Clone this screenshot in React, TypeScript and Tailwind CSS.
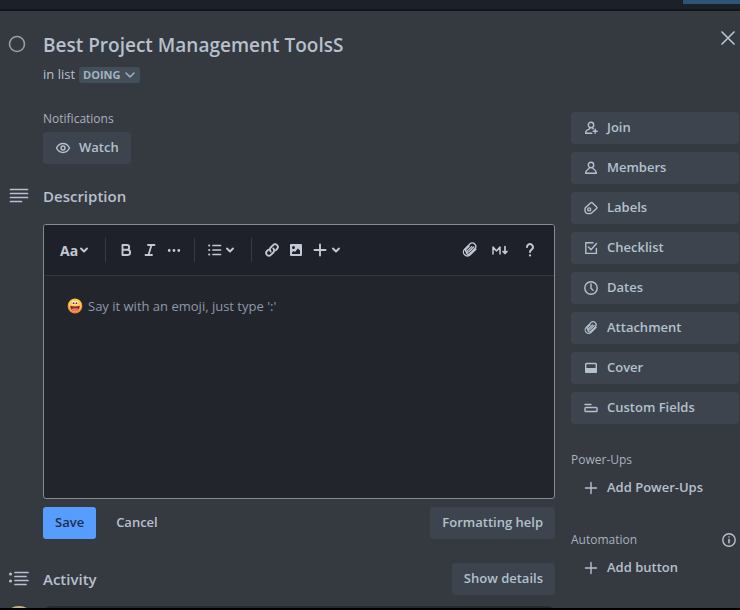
import type { ReactNode } from "react";

type IconProps = { children: ReactNode; className?: string; box?: string };

function Icon({ children, className = "size-4", box = "0 0 16 16" }: IconProps) {
  return (
    <svg
      viewBox={box}
      className={`shrink-0 ${className}`}
      fill="none"
      stroke="currentColor"
      strokeWidth="1.4"
      strokeLinecap="round"
      strokeLinejoin="round"
      aria-hidden="true"
    >
      {children}
    </svg>
  );
}

const clip = (
  <path
    d="M7.2 4.6 4.6 7.200a1.700 1.700 0 0 0 2.400 2.400l4.200-4.200M11.200 5.400 8 8.600M13.200 7.300l-5 5a3.500 3.500 0 0 1-5-5l4.700-4.700a3 3 0 0 1 4.300 4.300l-4.500 4.500a1.700 1.700 0 0 1-2.400-2.400L9.500 5"
    strokeWidth="1.200"
  />
);

const actions: { label: string; icon: ReactNode }[] = [
  {
    label: "Join",
    icon: (
      <>
        <circle cx="8" cy="5" r="2.700" />
        <path d="M8.800 13.300H2.600c0-2.500 2-3.800 4-4.500l.4-1.300M9.200 7.500l1 1.200M12.200 9.200v4M10.200 11.200h4" />
      </>
    ),
  },
  {
    label: "Members",
    icon: (
      <>
        <circle cx="8" cy="5" r="2.700" />
        <path d="M6.500 7.600c0 1.800-3.900 1.800-3.900 5.700h10.800c0-3.900-3.900-3.900-3.900-5.700" />
      </>
    ),
  },
  {
    label: "Labels",
    icon: (
      <>
        <path d="M2.600 7.600 7.800 2.800a1 1 0 0 1 1.400 0l4.400 4.200a1 1 0 0 1 0 1.400L8.600 13a2 2 0 0 1-1.400.6H5a3 3 0 0 1-3-3V9a2 2 0 0 1 .6-1.400Z" />
        <circle cx="6.200" cy="9.400" r="1.500" />
      </>
    ),
  },
  {
    label: "Checklist",
    icon: <path d="M10 2.800H2.800v10.600h10.600V8.500M5.500 7 8 9.700l5.500-6.200" />,
  },
  {
    label: "Dates",
    icon: (
      <>
        <circle cx="8" cy="8" r="6.200" />
        <path d="M8 4v4.200l2 2" />
      </>
    ),
  },
  { label: "Attachment", icon: clip },
  {
    label: "Cover",
    icon: (
      <>
        <rect x="2.700" y="3.500" width="10.600" height="8.800" rx="0.800" />
        <path d="M3 8.700h10v3.300H3Z" fill="currentColor" />
      </>
    ),
  },
  {
    label: "Custom Fields",
    icon: (
      <>
        <path d="M2 4.500h6" />
        <rect x="2" y="7.500" width="12" height="4" rx="0.800" />
      </>
    ),
  },
];

const plus = <path d="M8 2.500v11M2.500 8h11" />;

const subtleButton =
  "flex h-8 items-center rounded-[3px] bg-[#3d444d] px-3 text-[13px] font-semibold text-[#b4c0cd]";

const toolButton = "flex h-8 items-center justify-center text-[#c3c9d4]";

const smallHeading = "text-[12px] font-medium text-[#a9b2be]";

function Chevron() {
  return (
    <Icon className="h-2 w-[10px]" box="0 0 10 8">
      <path d="m2 2.500 3 3 3-3" strokeWidth="1.900" />
    </Icon>
  );
}

function Divider() {
  return <span className="h-6 w-px bg-[#363b44]" />;
}

function Toolbar() {
  return (
    <div
      role="toolbar"
      aria-label="Formatting"
      className="flex h-[51px] items-center justify-between border-b border-[#333740] bg-[#1e2129] pr-3 pl-4"
    >
      <div className="flex items-center">
        <button className={`${toolButton} mr-4 gap-px text-[14px] font-bold`} aria-label="Text styles">
          Aa
          <Chevron />
        </button>
        <Divider />
        <button className={`${toolButton} ml-2 w-6`} aria-label="Bold">
          <Icon>
            <path d="M4.500 3h4.300a2.400 2.400 0 0 1 0 4.800H4.500ZM4.500 7.800h5a2.600 2.600 0 0 1 0 5.200h-5Z" strokeWidth="1.900" />
          </Icon>
        </button>
        <button className={`${toolButton} w-6`} aria-label="Italic">
          <Icon>
            <path d="M6 3h6.500M3.500 13H10M9.500 3l-3 10" strokeWidth="1.800" />
          </Icon>
        </button>
        <button className={`${toolButton} mr-2 w-6`} aria-label="More formatting">
          <Icon>
            <path d="M3.200 8.500h.01M8 8.500h.01M12.800 8.500h.01" strokeWidth="2.800" />
          </Icon>
        </button>
        <Divider />
        <button className={`${toolButton} mr-4 ml-3 gap-[2px]`} aria-label="Lists">
          <Icon>
            <path d="M6 3.500h7.500M6 8h7.500M6 12.500h7.500" strokeWidth="1.700" />
            <path d="M2.200 3.500h.01M2.200 8h.01M2.200 12.500h.01" strokeWidth="2.200" />
          </Icon>
          <Chevron />
        </button>
        <Divider />
        <button className={`${toolButton} ml-2 w-6`} aria-label="Link">
          <Icon>
            <path
              d="M6.700 9.500a2.800 2.800 0 0 1 0-4l2.400-2.400a2.700 2.700 0 0 1 3.900 3.900l-1.400 1.400M9.300 6.500a2.800 2.800 0 0 1 0 4l-2.400 2.400A2.700 2.700 0 0 1 3 9l1.400-1.400"
              strokeWidth="1.800"
            />
          </Icon>
        </button>
        <button className={`${toolButton} w-6`} aria-label="Image">
          <Icon>
            <path
              d="M3 2h10a1 1 0 0 1 1 1v10a1 1 0 0 1-1 1H3a1 1 0 0 1-1-1V3a1 1 0 0 1 1-1Zm2.500 2a1.500 1.500 0 1 0 0 3 1.500 1.500 0 0 0 0-3ZM4 12h8V8.500L9.800 6.500 7 10 5.500 9 4 10.500Z"
              fill="currentColor"
              fillRule="evenodd"
              stroke="none"
            />
          </Icon>
        </button>
        <button className={`${toolButton} ml-1 gap-[3px]`} aria-label="Insert">
          <Icon>
            <path d="M8 2.500v11M2.500 8h11" strokeWidth="1.900" />
          </Icon>
          <Chevron />
        </button>
      </div>
      <div className="flex items-center gap-1">
        <button className={`${toolButton} w-6`} aria-label="Attach file">
          <Icon className="size-[18px]">{clip}</Icon>
        </button>
        <button className={`${toolButton} w-7`} aria-label="Markdown">
          <Icon className="h-4 w-5" box="0 0 20 16">
            <path d="M3 12V5l3.500 4L10 5v7" strokeWidth="1.500" />
            <path d="M15 4.500V11M13 9.500l2 2 2-2" strokeWidth="1.700" />
          </Icon>
        </button>
        <button className={`${toolButton} w-6`} aria-label="Editor help">
          <Icon>
            <path d="M5 5a3 3 0 1 1 4.500 2.700C8.500 8.300 8 8.700 8 10" strokeWidth="2" />
            <path d="M8 13.400h.01" strokeWidth="2.200" />
          </Icon>
        </button>
      </div>
    </div>
  );
}

function Grin() {
  return (
    <svg viewBox="0 0 16 16" className="mt-[2px] size-4 shrink-0" aria-hidden="true">
      <circle cx="8" cy="8" r="7.400" fill="#f0872e" />
      <circle cx="8" cy="7.200" r="6.500" fill="#fbcb52" />
      <ellipse cx="6.300" cy="4.800" rx="1.500" ry="1.900" fill="#fff" />
      <ellipse cx="9.700" cy="4.800" rx="1.500" ry="1.900" fill="#fff" />
      <circle cx="6.500" cy="5.200" r="0.900" fill="#4a2c1c" />
      <circle cx="9.500" cy="5.200" r="0.900" fill="#4a2c1c" />
      <path d="M3.200 7.800c3 .9 6.600.9 9.600 0 0 3.400-2 5.400-4.800 5.400s-4.800-2-4.800-5.400Z" fill="#8f2a22" />
      <path d="M4.400 11.200c1.800-1.400 5.400-1.400 7.200 0-.8 1.300-2 2-3.600 2s-2.800-.7-3.600-2Z" fill="#f2707c" />
    </svg>
  );
}

export default function App() {
  return (
    <div className="flex h-screen flex-col overflow-hidden bg-black font-['Open_Sans','Noto_Sans',sans-serif] text-[#b7c0cd]">
      <div className="flex h-[11px] shrink-0 justify-end border-b-2 border-[#11141b] bg-[#1c2029]">
        <div className="h-1 w-[57px] bg-[#2d5577]" />
      </div>

      <div className="mb-[2px] flex min-h-0 flex-1 flex-col overflow-hidden bg-[#353940]">
        <header className="flex shrink-0 items-start pt-[15px] pl-2">
          <button className="mt-[9px] mr-[17px] size-[18px] text-[#959eab]" aria-label="Mark complete">
            <Icon className="size-[18px]" box="0 0 18 18">
              <circle cx="9" cy="9" r="7.500" strokeWidth="1.600" />
            </Icon>
          </button>
          <div className="flex-1 pt-1">
            <h1 className="text-[19px] leading-[30px] font-semibold">Best Project Management ToolsS</h1>
            <p className="flex h-[30px] items-center gap-1 text-[13px]">
              in list
              <button className="flex h-4 items-center gap-1 rounded-[3px] bg-[#424e58] px-1 text-[11px] font-bold text-[#a5b3c0]">
                DOING
                <Icon className="h-2 w-3" box="0 0 12 8">
                  <path d="m2 2 4 4 4-4" strokeWidth="1.500" />
                </Icon>
              </button>
            </p>
          </div>
          <button className="flex size-6 items-center justify-center" aria-label="Close">
            <Icon className="size-[18px]" box="0 0 18 18">
              <path d="m3 3 12 12M15 3 3 15" strokeWidth="1.700" />
            </Icon>
          </button>
        </header>

        <div className="flex items-start gap-4 pt-[22px] pr-px">
          <main className="min-w-0 flex-1">
            <section className="pl-[43px]">
              <h2 className={`${smallHeading} pb-[6px] leading-[14px]`}>Notifications</h2>
              <button className={`${subtleButton} gap-2`}>
                <Icon>
                  <path d="M1.500 8C3 5 5.300 3.500 8 3.500S13 5 14.500 8C13 11 10.700 12.500 8 12.500S3 11 1.500 8Z" />
                  <circle cx="8" cy="8" r="2" />
                </Icon>
                Watch
              </button>
            </section>

            <section className="pt-5">
              <div className="flex h-6 items-center">
                <Icon className="mx-[9px] h-[18px] w-[20px]" box="0 0 20 18">
                  <path d="M1.500 2.500h17M1.500 6.500h17M1.500 10.500h17M1.500 14.500h11" strokeWidth="1.700" />
                </Icon>
                <h2 className="pl-[5px] text-[15px] font-semibold">Description</h2>
              </div>
              <div className="pt-4 pl-[43px]">
                <div className="overflow-hidden rounded-[3px] border border-[#858b95] bg-[#22252c]">
                  <Toolbar />
                  <div className="flex h-[222px] gap-[5px] pt-5 pr-5 pl-[23px]">
                    <Grin />
                    <textarea
                      aria-label="Description"
                      placeholder="Say it with an emoji, just type ':'"
                      className="h-full flex-1 resize-none bg-transparent text-[13px] leading-5 outline-none placeholder:text-[#8f98a5]"
                    />
                  </div>
                </div>
                <div className="flex items-center gap-2 pt-2">
                  <button className="h-8 rounded-[3px] bg-[#579dff] px-3 text-[13px] font-semibold text-[#1d2f4c]">
                    Save
                  </button>
                  <button className="h-8 px-3 text-[13px] font-semibold">Cancel</button>
                  <button className={`${subtleButton} ml-auto`}>Formatting help</button>
                </div>
              </div>
            </section>

            <section className="pt-6">
              <div className="flex h-8 items-center">
                <Icon className="mx-[8px] h-[18px] w-[22px]" box="0 0 22 18">
                  <path d="M7 2.500h13M7 6.500h11M7 10.500h13M7 14.500h11" strokeWidth="1.700" />
                  <path d="M2.500 4h.01M2.500 11h.01" strokeWidth="3" />
                </Icon>
                <h2 className="flex-1 pl-[5px] text-[15px] font-semibold">Activity</h2>
                <button className={subtleButton}>Show details</button>
              </div>
              <div className="flex items-start gap-2 pt-[11px] pl-[3px]">
                <span className="size-8 rounded-full border-2 border-[#c9b78b] bg-[#e8d9a0]" />
                <button className="h-9 flex-1 rounded-lg bg-[#25282f]" aria-label="Write a comment" />
              </div>
            </section>
          </main>

          <aside className="w-[168px] shrink-0">
            <ul className="flex flex-col gap-2">
              {actions.map((action) => (
                <li key={action.label}>
                  <button className={`${subtleButton} w-full gap-2`}>
                    <Icon>{action.icon}</Icon>
                    {action.label}
                  </button>
                </li>
              ))}
            </ul>
            <h3 className={`${smallHeading} pt-6 leading-6`}>Power-Ups</h3>
            <button className="flex h-8 items-center gap-2 px-3 text-[13px] font-semibold">
              <Icon>{plus}</Icon>
              Add Power-Ups
            </button>
            <div className="flex items-center justify-between pt-6 pr-[2px]">
              <h3 className={`${smallHeading} leading-6`}>Automation</h3>
              <button aria-label="About automation">
                <Icon>
                  <circle cx="8" cy="8" r="6.200" />
                  <path d="M8 7.500v3.300M8 5h.01" strokeWidth="1.600" />
                </Icon>
              </button>
            </div>
            <button className="flex h-8 items-center gap-2 px-3 text-[13px] font-semibold">
              <Icon>{plus}</Icon>
              Add button
            </button>
          </aside>
        </div>
      </div>
    </div>
  );
}
